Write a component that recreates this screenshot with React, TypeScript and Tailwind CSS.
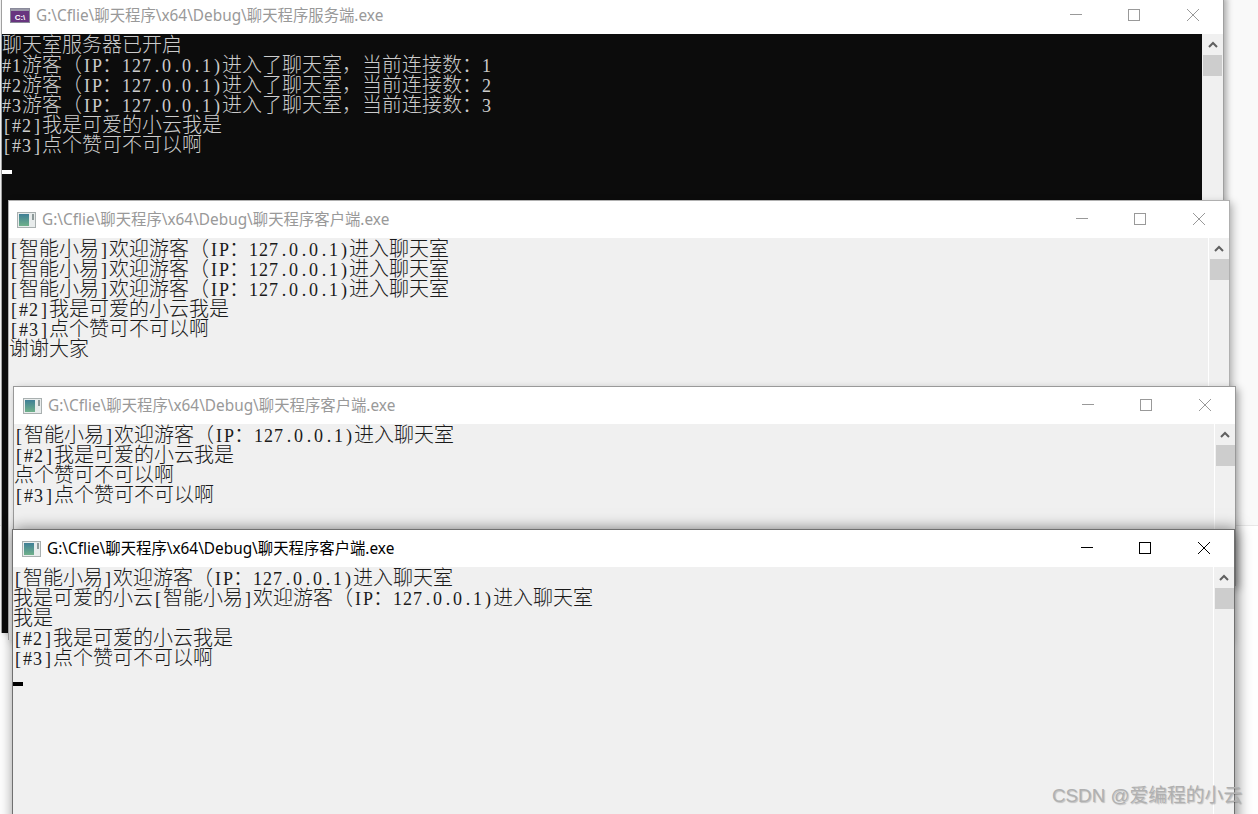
import React from "react";

function Latin({ text }: { text: string }) {
  const tokens = text.match(/[0-9#]+|[^0-9#]/g) ?? [];
  return (
    <span className="font-['Liberation_Serif',serif] text-[18px]">
      {tokens.map((t, i) =>
        /^[0-9#]/.test(t) ? (
          <span key={i} className="tracking-[1px]">{t}</span>
        ) : (
          <span key={i} className="inline-block w-[10px] text-center">{t}</span>
        )
      )}
    </span>
  );
}

function Con({ text }: { text: string }) {
  const parts = text.match(/[\x20-\x7e]+|[^\x20-\x7e]+/g) ?? [];
  return (
    <div className="h-5 leading-5 whitespace-pre">
      {parts.map((p, i) =>
        /^[\x20-\x7e]/.test(p) ? (
          <Latin key={i} text={p} />
        ) : (
          <span key={i} className="font-['Noto_Sans_CJK_SC',sans-serif] text-[20px] font-light">{p}</span>
        )
      )}
    </div>
  );
}

function VsIcon() {
  return (
    <svg width="20" height="15" viewBox="0 0 20 15" className="shrink-0">
      <rect x="0.5" y="0.5" width="19" height="14" fill="#68357f" stroke="#8a8a9a" />
      <rect x="1" y="1" width="18" height="2" fill="#9a9aa8" />
      <text x="10" y="12" textAnchor="middle" fontSize="8" fontWeight="700" fontFamily="Liberation Sans" fill="#fff">C:\</text>
    </svg>
  );
}

function ConsoleIcon() {
  return (
    <svg width="19" height="16" viewBox="0 0 19 16" className="shrink-0">
      <defs>
        <linearGradient id="cg" x1="0" y1="0" x2="0" y2="1">
          <stop offset="0" stopColor="#3f7f96" />
          <stop offset="1" stopColor="#6fb08a" />
        </linearGradient>
      </defs>
      <rect x="0.5" y="0.5" width="18" height="15" fill="#e8ecec" stroke="#a9b0b0" />
      <rect x="2" y="2" width="10" height="12" fill="url(#cg)" />
      <rect x="15" y="2" width="2" height="6" fill="#8d9a9a" />
    </svg>
  );
}

function Controls({ color }: { color: string }) {
  return (
    <div className="flex h-full shrink-0 pb-px">
      <div className="w-[59px] pl-px flex items-center justify-center">
        <svg width="12" height="12" viewBox="0 0 12 12"><path d="M0 5.5H12" stroke={color} /></svg>
      </div>
      <div className="w-[59px] pr-px flex items-center justify-center">
        <svg width="12" height="12" viewBox="0 0 12 12"><rect x="0.5" y="0.5" width="11" height="11" fill="none" stroke={color} /></svg>
      </div>
      <div className="w-[59px] pr-px flex items-center justify-center">
        <svg width="12" height="12" viewBox="0 0 12 12"><path d="M0 0L12 12M12 0L0 12" stroke={color} /></svg>
      </div>
    </div>
  );
}

function Scrollbar({ line }: { line: boolean }) {
  return (
    <div className={line ? "w-[21px] shrink-0 h-full flex flex-col items-center bg-[#f0f0f0] border-l border-white" : "w-[21px] shrink-0 h-full flex flex-col items-center bg-[#f0f0f0]"}>
      <div className="h-[21px] w-full flex items-center justify-center">
        <svg width="10" height="7" viewBox="0 0 10 7"><path d="M1 6L5 2L9 6" fill="none" stroke="#606060" strokeWidth="2" /></svg>
      </div>
      <div className="h-[21px] w-[19px] bg-[#cdcdcd]" />
    </div>
  );
}

type WinProps = {
  box: string;
  title: string;
  titleClass: string;
  titlePad: string;
  btn: string;
  icon: React.ReactNode;
  bodyClass: string;
  lines: string[];
  cursor?: string;
  line: boolean;
};

function Win({ box, title, titleClass, titlePad, btn, icon, bodyClass, lines, cursor, line }: WinProps) {
  return (
    <div className={box}>
      <div className="h-[37px] shrink-0 bg-white flex items-center">
        <div className={titlePad}>
          {icon}
          <span className={titleClass}>{title}</span>
        </div>
        <Controls color={btn} />
      </div>
      <div className="flex-1 min-h-0 flex">
        <div className={bodyClass}>
          <div>
            {lines.map((l, i) => (
              <Con key={i} text={l} />
            ))}
          </div>
          {cursor ? <div className={cursor} /> : null}
        </div>
        <Scrollbar line={line} />
      </div>
    </div>
  );
}

const inactive = "font-['Noto_Sans','Noto_Sans_CJK_SC',sans-serif] text-[15.36px] text-[#999999] whitespace-nowrap";
const active = "font-['Noto_Sans','Noto_Sans_CJK_SC',sans-serif] text-[15.36px] text-black whitespace-nowrap";
const pad8 = "flex-1 min-w-0 flex items-center gap-[6px] pl-[8px]";
const pad9 = "flex-1 min-w-0 flex items-center gap-[6px] pl-[9px]";

export default function App() {
  return (
    <div className="relative w-[1258px] h-[814px] overflow-hidden bg-white">
      <div className="absolute left-0 right-0 top-0 h-[526px] bg-[#f9f9f9] border-b border-[#e8e8e8]" />
      <Win
        box="absolute left-[1px] top-[-3px] w-[1223px] h-[636px] flex flex-col border-x border-[#a0a0a0] shadow-[3px_0_6px_rgba(0,0,0,0.3)]"
        title="G:\Cflie\聊天程序\x64\Debug\聊天程序服务端.exe"
        titleClass={inactive}
        titlePad={pad8}
        btn="#999999"
        icon={<VsIcon />}
        bodyClass="flex-1 bg-[#0c0c0c] text-[#cccccc] relative"
        lines={[
          "聊天室服务器已开启",
          "#1游客（IP：127.0.0.1)进入了聊天室，当前连接数：1",
          "#2游客（IP：127.0.0.1)进入了聊天室，当前连接数：2",
          "#3游客（IP：127.0.0.1)进入了聊天室，当前连接数：3",
          "[#2]我是可爱的小云我是",
          "[#3]点个赞可不可以啊",
        ]}
        cursor="absolute left-0 top-[136px] w-[10px] h-1 bg-white"
        line={false}
      />
      <Win
        box="absolute left-[8px] top-[200px] w-[1222px] h-[440px] flex flex-col border-x border-t border-[#b0b0b0] shadow-[3px_3px_8px_rgba(0,0,0,0.25)]"
        title="G:\Cflie\聊天程序\x64\Debug\聊天程序客户端.exe"
        titleClass={inactive}
        titlePad={pad8}
        btn="#999999"
        icon={<ConsoleIcon />}
        bodyClass="flex-1 bg-[#f0f0f0] text-[#1a1a1a]"
        lines={[
          "[智能小易]欢迎游客（IP：127.0.0.1)进入聊天室",
          "[智能小易]欢迎游客（IP：127.0.0.1)进入聊天室",
          "[智能小易]欢迎游客（IP：127.0.0.1)进入聊天室",
          "[#2]我是可爱的小云我是",
          "[#3]点个赞可不可以啊",
          "谢谢大家",
        ]}
        line
      />
      <Win
        box="absolute left-[13px] top-[386px] w-[1223px] h-[200px] flex flex-col border border-[#999999] shadow-[3px_3px_8px_rgba(0,0,0,0.3)]"
        title="G:\Cflie\聊天程序\x64\Debug\聊天程序客户端.exe"
        titleClass={inactive}
        titlePad={pad9}
        btn="#999999"
        icon={<ConsoleIcon />}
        bodyClass="flex-1 bg-[#f0f0f0] text-[#1a1a1a]"
        lines={[
          "[智能小易]欢迎游客（IP：127.0.0.1)进入聊天室",
          "[#2]我是可爱的小云我是",
          "点个赞可不可以啊",
          "[#3]点个赞可不可以啊",
        ]}
        line
      />
      <Win
        box="absolute left-[12px] top-[529px] w-[1223px] h-[320px] flex flex-col border border-[#707070] shadow-[2px_0_14px_rgba(0,0,0,0.5)]"
        title="G:\Cflie\聊天程序\x64\Debug\聊天程序客户端.exe"
        titleClass={active}
        titlePad={pad9}
        btn="#000000"
        icon={<ConsoleIcon />}
        bodyClass="flex-1 bg-[#f0f0f0] text-[#1a1a1a] relative"
        lines={[
          "[智能小易]欢迎游客（IP：127.0.0.1)进入聊天室",
          "我是可爱的小云[智能小易]欢迎游客（IP：127.0.0.1)进入聊天室",
          "我是",
          "[#2]我是可爱的小云我是",
          "[#3]点个赞可不可以啊",
        ]}
        cursor="absolute left-0 top-[115px] w-[10px] h-1 bg-black"
        line
      />
      <div className="absolute left-[1052px] top-[783px] font-['Liberation_Sans','Noto_Sans_CJK_SC',sans-serif] text-[18.8px] leading-[26px] text-[#b0b0b0] whitespace-nowrap [text-shadow:1px_1px_1px_rgba(0,0,0,0.2)]">
        CSDN @爱编程的小云
      </div>
    </div>
  );
}
